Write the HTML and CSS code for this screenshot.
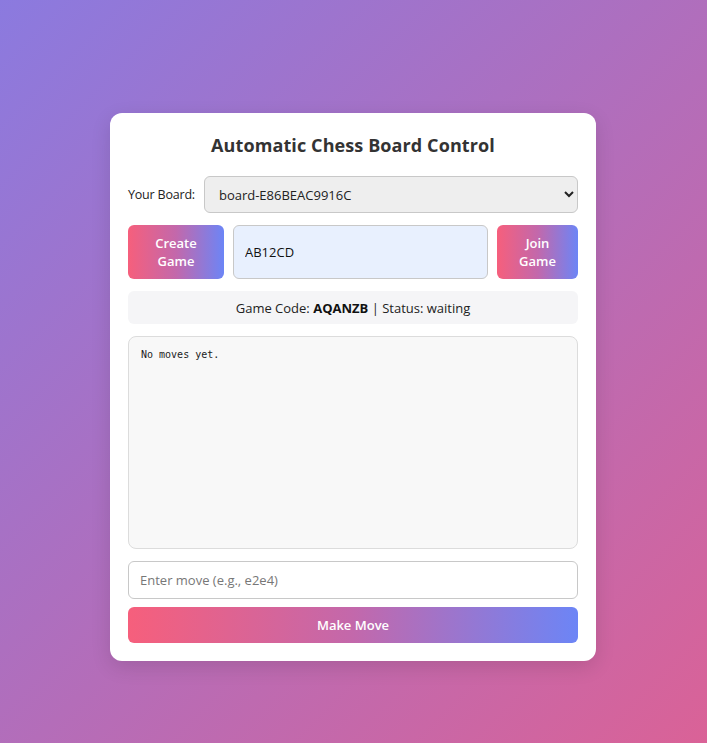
FILE: index.html
```html
<!DOCTYPE html>
<html>
<head>
<meta charset="utf-8">
<link rel="stylesheet" href="styles.css">
</head>
<body>
<div class="card">
  <h1 class="title">Automatic Chess Board Control</h1>
  <div class="board-row">
    <label class="board-label">Your Board:</label>
    <div class="select-wrap">
      <select class="board-select"><option>board-E86BEAC9916C</option></select>
    </div>
  </div>
  <div class="game-row">
    <button class="grad-btn side-btn create">Create Game</button>
    <input class="code-input" type="text" value="AB12CD">
    <button class="grad-btn side-btn join">Join Game</button>
  </div>
  <div class="status">Game Code: <b>AQANZB</b> | Status: waiting</div>
  <pre class="moves">No moves yet.</pre>
  <input class="move-input" type="text" placeholder="Enter move (e.g., e2e4)">
  <button class="grad-btn make-btn">Make Move</button>
</div>
</body>
</html>
```
FILE: styles.css
```css
html, body { margin: 0; height: 100%; }
body {
  font-family: "Open Sans", "Liberation Sans", sans-serif;
  background: linear-gradient(135deg, #8b7adf 0%, #ad6fbf 45%, #da6297 100%);
  display: flex;
  justify-content: center;
  padding-top: 113px;
  padding-right: 1px;
  box-sizing: border-box;
}
.card {
  width: 486px;
  height: 548px;
  box-sizing: border-box;
  background: #fff;
  border-radius: 12px;
  padding: 18px;
  box-shadow: 0 6px 20px rgba(0,0,0,0.12);
  display: flex;
  flex-direction: column;
}
.title {
  margin: 0;
  height: 45px;
  font-size: 18px;
  font-weight: 700;
  color: #333;
  text-align: center;
  line-height: 28px;
  letter-spacing: 0.1px;
}
.board-row {
  display: flex;
  align-items: center;
  gap: 9px;
  height: 37px;
}
.board-label { font-size: 12.5px; color: #222; letter-spacing: -0.2px; }
.select-wrap { flex: 1; position: relative; height: 37px; }
.board-select {
  width: 100%;
  height: 37px;
  box-sizing: border-box;
  background: #eeeeee;
  border: 1px solid #c8c8c8;
  border-radius: 6px;
  font-family: inherit;
  font-size: 13px;
  color: #222;
  padding: 0 10px;
}
.game-row {
  margin-top: 12px;
  display: flex;
  gap: 9px;
  height: 54px;
}
.grad-btn {
  border: none;
  color: #fff;
  font-family: inherit;
  font-weight: 600;
  font-size: 13px;
  background: linear-gradient(90deg, #f65f7c 0%, #c368ab 50%, #6c85f6 100%);
  border-radius: 6px;
  cursor: pointer;
}
.side-btn { line-height: 18px; padding: 0 18px; }
.create { width: 96px; }
.join { width: 81px; }
.code-input {
  flex: 1;
  min-width: 0;
  box-sizing: border-box;
  background: #e8f0fe;
  border: 1px solid #c8c8c8;
  border-radius: 6px;
  font-family: inherit;
  font-size: 13px;
  color: #111;
  padding: 0 11px;
}
.status {
  margin-top: 12px;
  height: 33px;
  background: #f5f5f7;
  border-radius: 6px;
  font-size: 13px;
  color: #222;
  display: flex;
  align-items: center;
  justify-content: center;
  white-space: pre;
}
.status b { font-weight: 700; color: #111; }
.moves {
  margin: 12px 0 0;
  height: 213px;
  box-sizing: border-box;
  background: #f8f8f8;
  border: 1px solid #dcdcdc;
  border-radius: 8px;
  padding: 12px 12px;
  font-family: "DejaVu Sans Mono", monospace;
  font-size: 10px;
  color: #222;
}
.move-input {
  margin-top: 12px;
  height: 38px;
  box-sizing: border-box;
  border: 1px solid #c8c8c8;
  border-radius: 6px;
  padding: 0 11px;
  font-family: inherit;
  font-size: 13px;
}
.move-input::placeholder { color: #777; }
.make-btn {
  margin-top: 8px;
  height: 36px;
}
```
